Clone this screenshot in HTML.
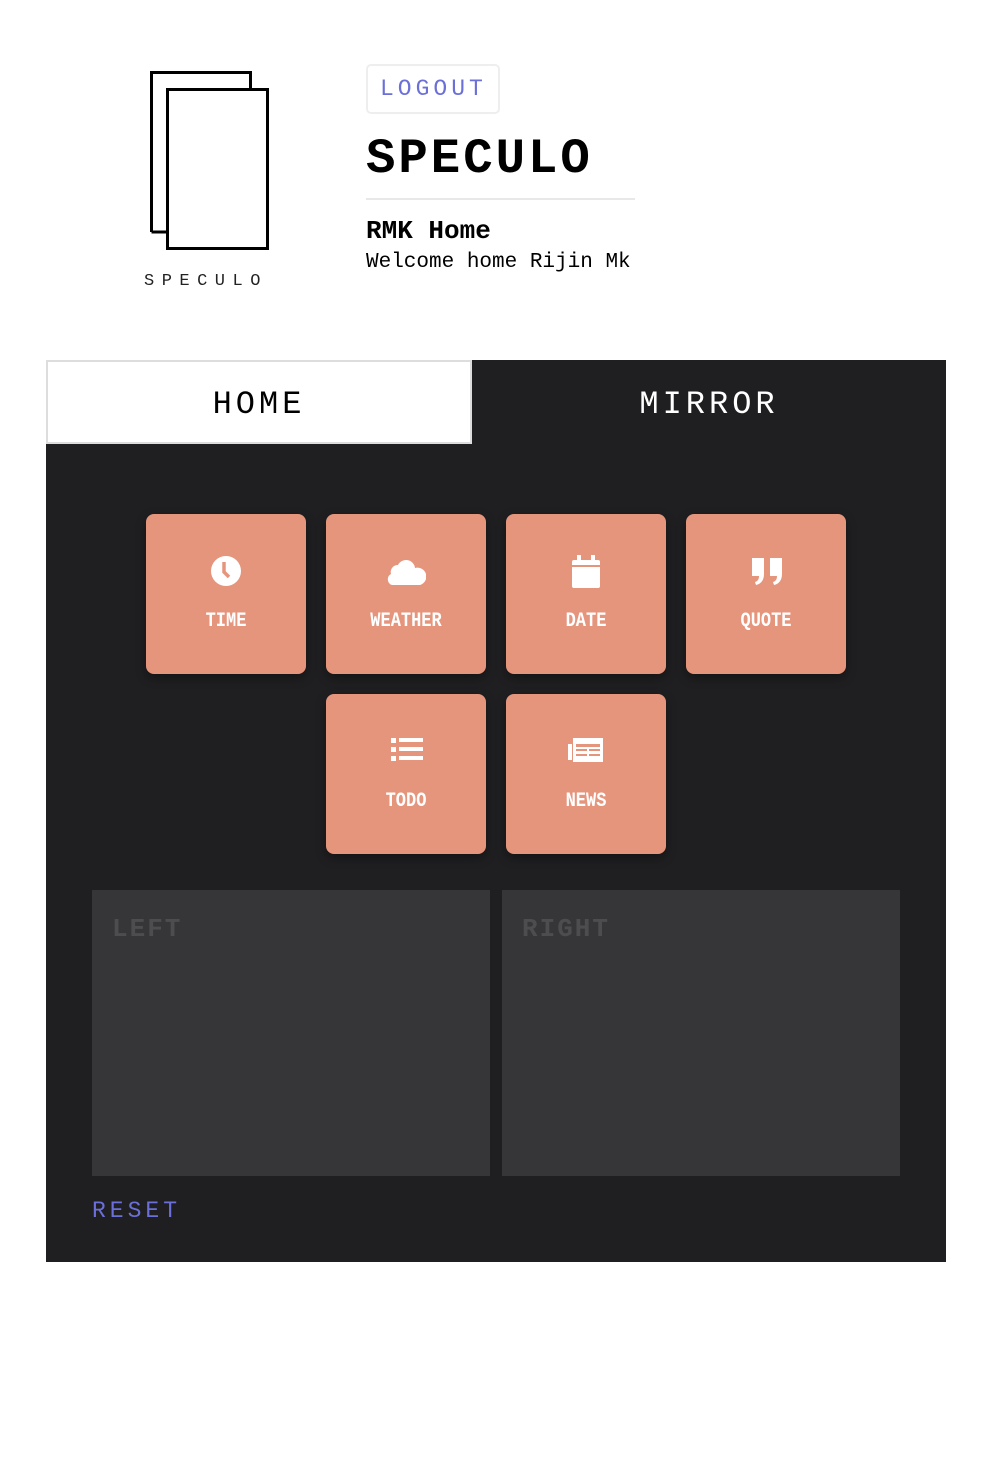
<!DOCTYPE html>
<html><head><meta charset="utf-8"><style>
*{margin:0;padding:0;box-sizing:border-box}
body{width:992px;height:1472px;background:#fff;font-family:"Liberation Mono","DejaVu Sans Mono",monospace;position:relative;overflow:hidden}
.abs{position:absolute}
.tile{position:absolute;width:160px;height:160px;background:#e6957d;border-radius:8px;box-shadow:0 4px 10px rgba(0,0,0,.35);color:#fff;text-align:center}
.tile svg{position:absolute;left:64px;top:40px}
.tile span{position:absolute;left:0;right:0;top:96px;font-size:20px;font-weight:bold;transform:scaleX(.85);letter-spacing:0}
.panel{position:absolute;top:890px;width:398px;height:286px;background:#363638}
.panel span{position:absolute;left:20px;top:24px;font-size:26px;font-weight:bold;color:#4d4d4f;letter-spacing:2px}
</style></head><body>
<svg class="abs" style="left:140px;top:62px" width="140" height="200">
<path d="M11.5 170V10.5H110.5V26" fill="none" stroke="#000" stroke-width="3"/>
<path d="M11.5 170H27" fill="none" stroke="#000" stroke-width="3"/>
<rect x="27.5" y="27.5" width="100" height="159" fill="#fff" stroke="#000" stroke-width="3"/>
</svg>
<div class="abs" style="left:144px;top:272px;font-size:17px;letter-spacing:7.5px;color:#222">SPECULO</div>
<div class="abs" style="left:366px;top:64px;width:134px;height:50px;border:2px solid #eee;border-radius:5px;color:#6a70d8;font-size:23px;letter-spacing:4px;padding:10px 0 0 12px">LOGOUT</div>
<div class="abs" style="left:366px;top:131px;font-size:49px;font-weight:bold;letter-spacing:3px;color:#000">SPECULO</div>
<div class="abs" style="left:366px;top:198px;width:269px;height:2px;background:#e8e8e8"></div>
<div class="abs" style="left:366px;top:216px;font-size:26px;font-weight:bold;color:#000">RMK Home</div>
<div class="abs" style="left:366px;top:251px;font-size:21px;color:#000">Welcome home Rijin Mk</div>

<div class="abs" style="left:46px;top:360px;width:900px;height:902px;background:#1f1f21"></div>
<div class="abs" style="left:46px;top:360px;width:426px;height:84px;background:#fff;border:2px solid #ddd"></div>
<div class="abs" style="left:46px;top:386px;width:426px;text-align:center;font-size:32px;letter-spacing:4px;color:#000">HOME</div>
<div class="abs" style="left:472px;top:386px;width:474px;text-align:center;font-size:32px;letter-spacing:4px;color:#fff">MIRROR</div>

<div class="tile" style="left:146px;top:514px"><svg width="32" height="32" viewBox="0 0 32 32"><circle cx="16" cy="17" r="15" fill="#fff"/><path d="M14 8v10l5 5" stroke="#e6957d" stroke-width="3.5" fill="none"/></svg><span>TIME</span></div>
<div class="tile" style="left:326px;top:514px"><svg width="40" height="32" viewBox="0 0 40 32" style="left:60px"><path d="M6 31a6 6 0 0 1-1-11a7 7 0 0 1 7-9a9 9 0 0 1 17 3a7 7 0 0 1 5 17z" fill="#fff"/></svg><span>WEATHER</span></div>
<div class="tile" style="left:506px;top:514px"><svg width="32" height="34" viewBox="0 0 32 34"><rect x="2" y="6" width="28" height="28" rx="2" fill="#fff"/><rect x="7" y="1" width="4" height="7" fill="#fff"/><rect x="21" y="1" width="4" height="7" fill="#fff"/><rect x="2" y="11" width="28" height="2" fill="#e6957d"/></svg><span>DATE</span></div>
<div class="tile" style="left:686px;top:514px"><svg width="34" height="34" viewBox="0 0 34 34"><path d="M2 4h12v16c0 6-3 10-8 11l-1-3c3-1 4-3 4-6H2z M20 4h12v16c0 6-3 10-8 11l-1-3c3-1 4-3 4-6h-7z" fill="#fff"/></svg><span>QUOTE</span></div>
<div class="tile" style="left:326px;top:694px"><svg width="34" height="32" viewBox="0 0 34 32"><rect x="1" y="4" width="5" height="5" fill="#fff"/><rect x="9" y="4" width="24" height="4" fill="#fff"/><rect x="1" y="13" width="5" height="5" fill="#fff"/><rect x="9" y="13" width="24" height="4" fill="#fff"/><rect x="1" y="22" width="5" height="5" fill="#fff"/><rect x="9" y="22" width="24" height="4" fill="#fff"/></svg><span>TODO</span></div>
<div class="tile" style="left:506px;top:694px"><svg width="38" height="32" viewBox="0 0 38 32" style="left:61px"><path d="M1 10h4v16h-4z M6 4h30v24h-30z" fill="#fff"/><g fill="#e6957d"><rect x="9" y="10" width="24" height="3"/><rect x="9" y="15" width="11" height="2"/><rect x="22" y="15" width="11" height="2"/><rect x="9" y="20" width="11" height="2"/><rect x="22" y="20" width="11" height="2"/></g></svg><span>NEWS</span></div>

<div class="panel" style="left:92px"><span>LEFT</span></div>
<div class="panel" style="left:502px"><span>RIGHT</span></div>
<div class="abs" style="left:92px;top:1198px;font-size:23px;letter-spacing:4px;color:#6b6fd9">RESET</div>
</body></html>
